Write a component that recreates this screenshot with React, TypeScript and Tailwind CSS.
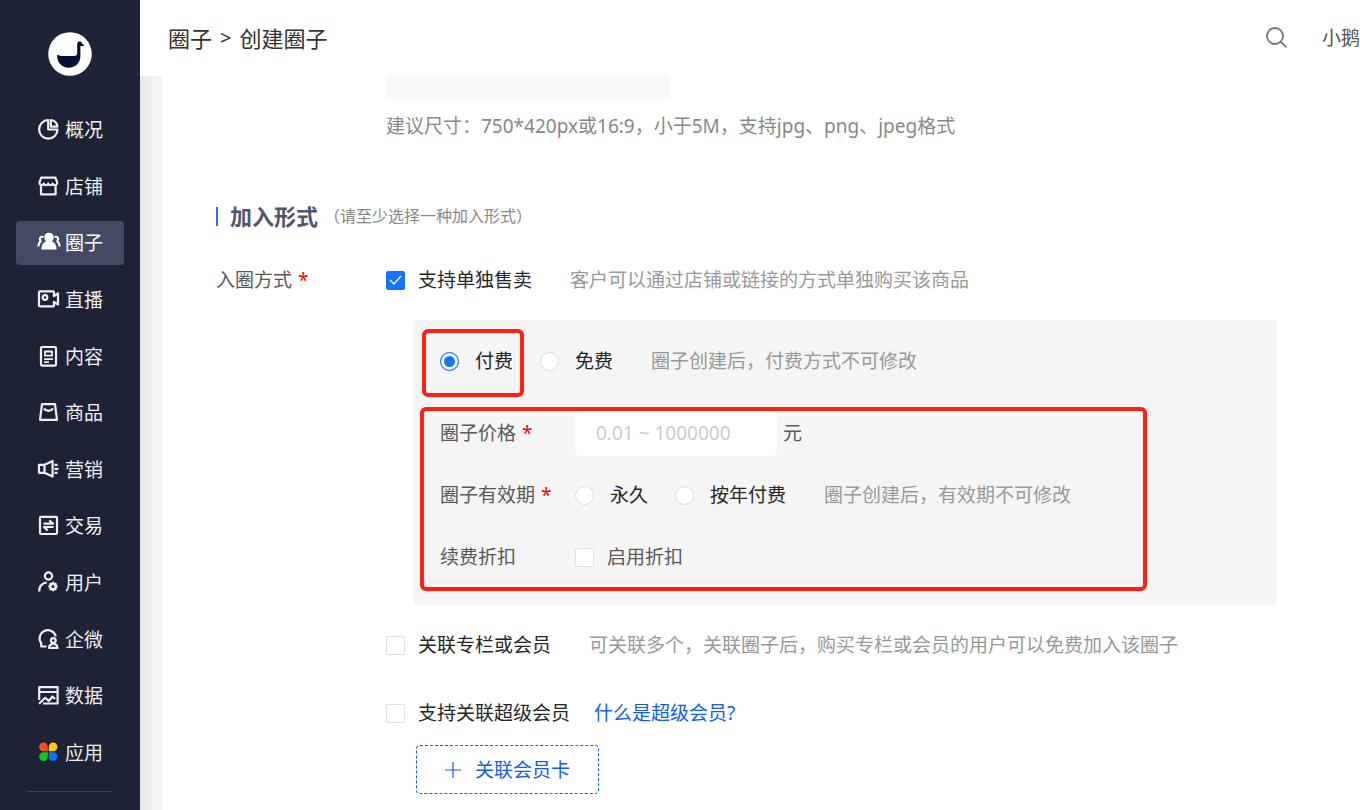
import React from "react"
import clsx from "clsx"

const icons: Record<string, React.ReactNode> = {
  overview: (
    <>
      <path d="M10.2 1.2a9.2 9.2 0 1 0 9.300 9.300h-9.300z" />
      <path d="M12.800 1a7.600 7.600 0 0 1 6.600 6.600h-6.600z" />
    </>
  ),
  shop: (
    <>
      <path d="M3.200 1.600h14.200l1.700 4.600v1.400a2.300 2.300 0 0 1-4.400 0 2.300 2.300 0 0 1-4.400 0 2.300 2.300 0 0 1-4.400 0 2.300 2.300 0 0 1-4.300 0V6.200z" />
      <path d="M3 10v8.400h14.600V10" />
    </>
  ),
  circle: (
    <>
      <path d="M5.500 5C2.500 4 .8 6.500 2.600 9.300 1 10.500.4 12 .4 14.500M16.500 5c3-1 4.700 1.500 2.900 4.300 1.600 1.200 2.200 2.700 2.200 5.200" />
      <path
        d="M11 .8c2.800 0 4.700 2 4.700 4.600 0 1.800-.9 3-2 3.900 2.600 1 4.900 3.200 4.900 8.200H3.400c0-5 2.300-7.200 4.900-8.200-1.100-.9-2-2.100-2-3.900C6.300 2.800 8.200.8 11 .8z"
        fill="currentColor"
        stroke="none"
      />
    </>
  ),
  live: (
    <>
      <path d="M16 6V3.400a1 1 0 0 0-1-1H2a1 1 0 0 0-1 1v13a1 1 0 0 0 1 1h13a1 1 0 0 0 1-1V14" />
      <circle cx="7" cy="8.500" r="2.300" />
      <path d="M15 7.500l5-3v11l-5-3" />
    </>
  ),
  content: (
    <>
      <rect x="3" y="1" width="15" height="18.600" rx="1" />
      <path d="M7 5.500h7v4.200H7zM6 13.200h9M6 16.200h5" strokeWidth="1.800" />
    </>
  ),
  goods: (
    <>
      <path d="M4 2.200h13l2 15.600H2z" />
      <path d="M6 6.500c2.500 3.200 6.500 3.200 9 0" />
    </>
  ),
  marketing: (
    <>
      <path d="M1 5.800h5.500L14.600 2v15.600l-8.100-3.800H1zM6.500 5.800v8" />
      <path d="M16.500 5.800h3M16.500 9.800h4M16.500 13.800h3" />
    </>
  ),
  trade: (
    <>
      <rect x="2" y="1.800" width="17" height="17.200" rx="1" />
      <path d="M5.500 8.700h9.600L11.300 5.400M15.500 12H5.900l3.800 3.300" />
    </>
  ),
  user: (
    <>
      <circle cx="10.500" cy="4" r="3.600" />
      <path d="M1.200 19.500c0-5 2.600-8.300 7.600-9" />
      <circle cx="15" cy="14.500" r="2.700" strokeWidth="2.400" />
      <path d="M15 9.800v1.600M15 17.600v1.600M10.300 14.500h1.600M18.100 14.500h1.600M11.700 11.200l1.100 1.100M17.200 16.700l1.100 1.100M11.700 17.800l1.100-1.100M17.200 12.300l1.100-1.100" />
    </>
  ),
  wecom: (
    <>
      <path d="M8.500 17.500H3.200v-3.300A8.200 8.200 0 1 1 17.800 7.500" />
      <circle cx="15.300" cy="11.500" r="2.400" />
      <path d="M11 18.800c.2-2.500 1.600-3.800 4.300-3.800s4.100 1.300 4.300 3.800z" />
    </>
  ),
  data: (
    <>
      <path d="M1.200 15V2.200h18.400v16.300H5M1.200 7h18.400" />
      <path d="M1 18.800l6.300-6 3.500 3.200 3.700-4.500 2.500 2.500" />
    </>
  ),
  apps: (
    <g stroke="none">
      <path d="M5.500.6A4.300 4.300 0 0 1 9.800 5v4.300H5.500a4.300 4.300 0 0 1 0-8.700z" fill="#ff4b26" />
      <path d="M15.100.6a4.300 4.300 0 0 1 0 8.700h-4.300V5A4.300 4.300 0 0 1 15.100.6z" fill="#ffc90e" />
      <path d="M5.500 10.300h4.300v4.300a4.300 4.300 0 1 1-4.300-4.300z" fill="#12cc1c" />
      <path d="M10.800 10.300h4.300a4.300 4.300 0 1 1-4.300 4.300z" fill="#1472ff" />
    </g>
  ),
}

const menu = [
  { icon: "overview", name: "概况" },
  { icon: "shop", name: "店铺" },
  { icon: "circle", name: "圈子", active: true },
  { icon: "live", name: "直播" },
  { icon: "content", name: "内容" },
  { icon: "goods", name: "商品" },
  { icon: "marketing", name: "营销" },
  { icon: "trade", name: "交易" },
  { icon: "user", name: "用户" },
  { icon: "wecom", name: "企微" },
  { icon: "data", name: "数据" },
  { icon: "apps", name: "应用" },
]

const Sidebar: React.FC = () => (
  <aside className="flex h-screen w-[140px] shrink-0 flex-col bg-[#1e2235] px-4 pt-8 pb-[18px] text-[#f0f0f0]">
    <a href="#" aria-label="首页" className="self-center">
      <svg viewBox="0 0 44 44" className="size-11">
        <circle cx="22" cy="22" r="21.800" fill="#fff" />
        <path
          d="M9 22.800c2 1 4 1.200 6.500 1.200H26c2 0 3.200-1 3.200-3v-8.500c0-2 .9-3.300 2.500-3.300 1.300 0 1.900.8 2.200 2.200l2 1.300-.3 1.200h-3.200V24c0 7-4.900 11.700-11.700 11.700C13.500 35.700 9 30.500 9 22.800z"
          fill="#041033"
        />
      </svg>
    </a>
    <nav className="mt-8 flex flex-1 flex-col justify-between">
      {menu.map((item) => (
        <a
          key={item.icon}
          href="#"
          className={clsx("flex h-11 items-center gap-[5px] rounded-sm pl-[22px]", item.active && "bg-[#434b62] text-white")}
        >
          <svg viewBox="0 0 22 22" className="size-[22px] overflow-visible" fill="none" stroke="currentColor" strokeWidth="2.200" strokeLinejoin="round">
            {icons[item.icon]}
          </svg>
          {item.name}
        </a>
      ))}
    </nav>
    <hr className="mx-[11px] mt-4 border-[#3b435a]" />
  </aside>
)

const Header: React.FC = () => (
  <header className="flex h-[76px] items-center justify-between bg-white pl-7">
    <nav className="flex items-center gap-2 text-[22px] text-[#333]">
      <a href="#">圈子</a>
      <span className="text-xl">&gt;</span>
      <span>创建圈子</span>
    </nav>
    <div className="flex items-center gap-[34px] text-[#555]">
      <button type="button" aria-label="搜索">
        <svg viewBox="0 0 22 22" className="size-[22px]" fill="none" stroke="#777" strokeWidth="1.800">
          <circle cx="9" cy="9" r="8" />
          <path d="M14.700 14.700l5.600 5.600" />
        </svg>
      </button>
      <a href="#">小鹅</a>
    </div>
  </header>
)

interface ChoiceProps {
  label: string;
  checked?: boolean;
  muted?: boolean;
}

const Checkbox: React.FC<ChoiceProps> = ({ label, checked, muted }) => (
  <label className={clsx("flex items-center gap-[13px]", muted ? "text-[#595959]" : "text-[#262626]")}>
    <span className="relative size-[19px]">
      <input
        type="checkbox"
        defaultChecked={checked}
        className="peer block size-[19px] appearance-none rounded-xs border border-[#dcdfe6] bg-white checked:border-[#1472ff] checked:bg-[#1472ff]"
      />
      <svg viewBox="0 0 19 19" className="pointer-events-none absolute inset-0 opacity-0 peer-checked:opacity-100" fill="none" stroke="#fff" strokeWidth="1.300">
        <path d="M4 9l4 4 7-8" />
      </svg>
    </span>
    {label}
  </label>
)

const Radio: React.FC<ChoiceProps & { name: string }> = ({ name, label, checked }) => (
  <label className="flex items-center gap-4 text-[#262626]">
    <input
      type="radio"
      name={name}
      defaultChecked={checked}
      className="size-[19px] appearance-none rounded-full border border-[#dcdcdc] bg-white checked:border-[#1472ff] checked:bg-[#1472ff] checked:shadow-[inset_0_0_0_3px_#fff]"
    />
    {label}
  </label>
)

const Star = () => <span className="ml-[6px] text-[#ff0000]">*</span>

const Hint: React.FC<{ children: React.ReactNode }> = ({ children }) => (
  <span className="ml-[38px] text-[#999]">{children}</span>
)

const PayPanel: React.FC = () => (
  <div className="mt-[26px] ml-[27px] rounded-xs bg-[#f5f5f5] px-[27px] pt-4 pb-[34px]">
    <div className="flex h-[50px] items-center">
      <div className="relative mr-[27px]">
        <Radio name="pay" label="付费" checked />
        <div className="pointer-events-none absolute -top-[18px] -right-[11px] -bottom-[22px] -left-[18px] rounded-md border-4 border-[#ff1e12]" />
      </div>
      <Radio name="pay" label="免费" />
      <Hint>圈子创建后，付费方式不可修改</Hint>
    </div>

    <div className="relative mt-6 w-fit">
      <div className="flex items-center">
        <label htmlFor="price" className="w-[135px] text-[#595959]">圈子价格<Star /></label>
        <input
          id="price"
          type="text"
          placeholder="0.01 ~ 1000000"
          className="h-[46px] w-[202px] rounded-md bg-white px-[21px] placeholder:text-[#ccc]"
        />
        <span className="ml-[6px] text-[#595959]">元</span>
      </div>
      <div className="mt-[25px] flex items-center">
        <span className="w-[135px] text-[#595959]">圈子有效期<Star /></span>
        <div className="mr-[27px]">
          <Radio name="period" label="永久" />
        </div>
        <Radio name="period" label="按年付费" />
        <Hint>圈子创建后，有效期不可修改</Hint>
      </div>
      <div className="mt-[34px] flex items-center">
        <span className="w-[135px] text-[#595959]">续费折扣</span>
        <Checkbox label="启用折扣" muted />
      </div>
      <div className="pointer-events-none absolute -top-[3px] -right-[76px] -bottom-5 -left-5 rounded-md border-4 border-[#ff1e12]" />
    </div>
  </div>
)

export default function App() {
  return (
    <div className="flex h-screen overflow-hidden bg-white font-['Noto_Sans','Noto_Sans_CJK_SC',sans-serif] text-[19px] leading-7">
      <Sidebar />
      <div className="flex min-w-0 flex-1 flex-col">
        <Header />
        <div className="flex min-h-0 flex-1">
          <div className="w-[22px] shrink-0 bg-linear-to-r from-[#e8e8e8] to-[#f4f4f4] to-70%" />
          <main className="flex-1 overflow-y-auto pr-[83px] pl-[54px]">
            <div className="ml-[170px]">
              <div className="h-[23px] w-[284px] rounded-b-xs bg-[#f7f8fa]" />
              <p className="mt-[13px] text-[#888]">建议尺寸：750*420px或16:9，小于5M，支持jpg、png、jpeg格式</p>
            </div>

            <div className="mt-[60px] flex items-center leading-8">
              <span className="h-[19px] w-[2px] bg-[#1472ff]" />
              <h2 className="ml-3 text-[22px] font-bold text-[#4f566b]">加入形式</h2>
              <span className="ml-[6px] text-base text-[#888]">（请至少选择一种加入形式）</span>
            </div>

            <div className="mt-[34px] flex">
              <div className="w-[170px] shrink-0 text-[#595959]">入圈方式<Star /></div>
              <div className="flex-1">
                <div className="flex items-center">
                  <Checkbox label="支持单独售卖" checked />
                  <Hint>客户可以通过店铺或链接的方式单独购买该商品</Hint>
                </div>
                <PayPanel />
                <div className="mt-[26px] flex items-center">
                  <Checkbox label="关联专栏或会员" />
                  <Hint>可关联多个，关联圈子后，购买专栏或会员的用户可以免费加入该圈子</Hint>
                </div>
                <div className="mt-10 flex items-center">
                  <Checkbox label="支持关联超级会员" />
                  <a href="#" className="ml-6 text-[#105cfb]">什么是超级会员?</a>
                </div>
                <button type="button" className="mt-[18px] ml-[30px] flex h-[49px] items-center gap-[14px] rounded-sm border border-dashed border-[#105cfb] px-7 text-[#105cfb]">
                  <svg viewBox="0 0 16 16" className="size-4" stroke="currentColor" strokeWidth="1.200">
                    <path d="M8 0v16M0 8h16" />
                  </svg>
                  关联会员卡
                </button>
              </div>
            </div>
          </main>
        </div>
      </div>
    </div>
  )
}
